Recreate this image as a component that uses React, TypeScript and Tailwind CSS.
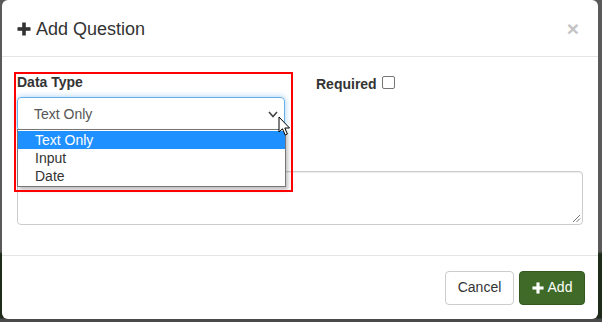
import React from 'react';

function PlusGlyph({ className }: { className?: string }) {
  return (
    <svg viewBox="0 0 14 14" className={className} fill="currentColor">
      <rect x="5.2" y="0.5" width="3.6" height="13" />
      <rect x="0.5" y="5.2" width="13" height="3.6" />
    </svg>
  );
}

function Cursor() {
  return (
    <svg width="14" height="22" viewBox="0 0 14 22" className="absolute left-[276px] top-[116px]">
      <path
        d="M1 1 L1 16 L4.5 12.8 L7.2 19 L9.4 18 L6.8 12 L11.5 12 Z"
        fill="#fff"
        stroke="#000"
        strokeWidth="1"
        strokeLinejoin="round"
      />
    </svg>
  );
}

export default function App() {
  const options = ['Text Only', 'Input', 'Date'];

  return (
    <div
      className="w-[602px] h-[322px] pl-[2px] pr-[4px] pb-[3px] bg-[linear-gradient(to_bottom,#5a5a5a_0%,#5a5a5a_78%,#1e2a1a_79%,#1e2a1a_98.8%,#4a4a4a_99%)] font-['Liberation_Sans',Arial,sans-serif] text-[14px] text-[#333]"
    >
      <div className="relative h-full bg-white rounded-[6px] flex flex-col">
        {/* header */}
        <div className="h-[57px] shrink-0 px-[15px] flex items-center justify-between border-b border-[#e5e5e5]">
          <h4 className="flex items-center gap-[5px] text-[18px] leading-[20px] text-[#333] mt-[1px]">
            <PlusGlyph className="w-[14px] h-[14px]" />
            <span>Add Question</span>
          </h4>
          <button className="text-[21px] font-bold leading-none text-[#c4c4c4] mr-[4px]">×</button>
        </div>

        {/* body */}
        <div className="flex-1 px-[15px] pt-[15px]">
          <div className="grid grid-cols-2 gap-[30px]">
            <div>
              <label className="block font-bold leading-[20px] mb-[5px]">Data Type</label>
              <div className="relative h-[34px] rounded-[4px] border border-[#66afe9] shadow-[0_0_6px_rgba(102,175,233,0.6)] flex items-center pl-[16px] text-[#555]">
                Text Only
                <svg width="10" height="7" viewBox="0 0 10 7" className="absolute right-[6px] top-[13px]">
                  <path d="M1 1 L5 5.5 L9 1" fill="none" stroke="#444" strokeWidth="1.6" />
                </svg>
              </div>
            </div>
            <div className="pt-[2px] pl-[1px]">
              <label className="flex items-center gap-[5px] font-bold leading-[20px]">
                Required
                <span className="w-[13px] h-[13px] rounded-[2px] border border-[#767676] bg-white mb-[4px]" />
              </label>
            </div>
          </div>

          {/* question text field; its label sits under the open list */}
          <div className="mt-[15px]">
            <div className="h-[20px] mb-[5px]" />
            <div className="relative h-[54px] rounded-[4px] border border-[#ccc] shadow-[inset_0_1px_1px_rgba(0,0,0,0.075)]">
              <svg width="9" height="9" viewBox="0 0 9 9" className="absolute right-[1px] bottom-[1px]">
                <path d="M8 1 L1 8 M8 4.5 L4.5 8" stroke="#777" strokeWidth="1" />
              </svg>
            </div>
          </div>
        </div>

        {/* footer */}
        <div className="h-[64px] shrink-0 border-t border-[#e5e5e5] pl-[13px] pr-[13px] flex items-center justify-end gap-[5px]">
          <button className="h-[34px] w-[69px] rounded-[4px] border border-[#ccc] bg-white text-[#333]">
            Cancel
          </button>
          <button className="h-[34px] w-[66px] rounded-[4px] border border-[#34591f] bg-[#3f6a28] text-white flex items-center justify-center gap-[4px]">
            <PlusGlyph className="w-[12px] h-[12px]" />
            Add
          </button>
        </div>

        {/* open select list */}
        <div className="absolute left-[15px] top-[129px] w-[269px] border border-[#767676] bg-white shadow-[2px_3px_4px_rgba(0,0,0,0.25)] py-[1px]">
          {options.map((o, i) => (
            <div
              key={o}
              className={
                i === 0
                  ? 'h-[18px] leading-[18px] pl-[17px] bg-[#1e90ff] text-white'
                  : 'h-[18px] leading-[18px] pl-[17px] text-[#333]'
              }
            >
              {o}
            </div>
          ))}
        </div>

        {/* annotation */}
        <div className="absolute left-[12px] top-[72px] w-[279px] h-[120px] border-2 border-[#ff0000] pointer-events-none" />

        <Cursor />
      </div>
    </div>
  );
}
